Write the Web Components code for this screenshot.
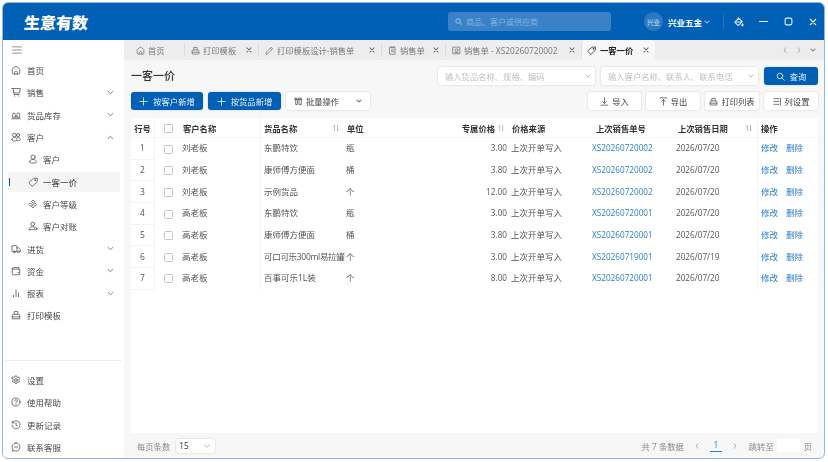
<!DOCTYPE html>
<html lang="zh-CN">
<head>
<meta charset="utf-8">
<title>生意有数</title>
<style>
    html, body { margin: 0; height: 100%; background: #fff; }
    body { padding: 2px 3px 3px 2px; box-sizing: border-box; font-family: "Open Sans", "Noto Sans CJK SC", sans-serif; }
</style>
</head>
<body>
<app-window>
    <app-header slot="header"></app-header>
    <side-nav slot="nav"></side-nav>
    <tab-bar slot="tabs"></tab-bar>
    <price-page slot="page"></price-page>
</app-window>

<script>
const ICONS = {
    home: '<path d="M2 7.500c0-1 .4-1.700 1.200-2.300L8 1.800l4.800 3.400c.8.600 1.200 1.300 1.200 2.300v5a2 2 0 0 1-2 2H4a2 2 0 0 1-2-2Z"/><path d="M5.500 14.500c0-3 1-5 2.500-5s2.500 2 2.500 5"/>',
    cart: '<path d="M1 2.500h14l-1.500 7H4.500L3.500 2.500"/><path d="M4.500 9.500 5 12h8"/><path d="M5.500 14.500h.5M12 14.500h.5"/>',
    stock: '<path d="M1 14h14M2.500 11V7a2.200 2.200 0 0 1 4.400 0v4ZM9.500 11V7a2.200 2.200 0 0 1 4.400 0v4ZM6.900 11h2.600"/>',
    users: '<circle cx="5.500" cy="5" r="3"/><circle cx="11.300" cy="4.800" r="2.500"/><path d="M1.500 12c0-2 1.800-3.500 4-3.500s4 1.500 4 3.500-1.800 2.500-4 2.500-4-.5-4-2.500Z"/><path d="M10 8.500c2.500-.4 5 1 5 3.200 0 1.800-2 2.500-5 2.300"/>',
    user: '<circle cx="8" cy="5" r="3.300"/><path d="M2.500 12.500c0-2.200 2.500-3.700 5.500-3.700s5.500 1.500 5.500 3.700c0 1.700-2.500 2-5.500 2s-5.500-.3-5.500-2Z"/>',
    tag: '<path d="M14.500 2H9L1.800 8.400a1 1 0 0 0 0 1.400l4.400 4.700a1 1 0 0 0 1.400 0L14.500 7.500Z"/><circle cx="11.300" cy="5" r=".8"/>',
    grade: '<path d="m8.500 2 2.500 2.500L8.500 7 6 4.500ZM4 6.500l2.500 2.500L4 11.500 1.500 9ZM12 7l1.500 2-1.500 2-2-2ZM8 10.500l2 2-2 2-2-2Z"/>',
    account: '<circle cx="7.500" cy="4.800" r="3"/><path d="M2 14c0-3 2.400-5 5.500-5 1.200 0 2.200.3 3 .8"/><path d="M2 14h7"/><circle cx="12.500" cy="12.500" r="2"/>',
    truck: '<path d="M1.500 4a1.500 1.500 0 0 1 1.500-1.500h5A1.500 1.500 0 0 1 9.500 4v8h-5M2 12 1.500 11V4M9.500 6h2.500l3 3v3h-1"/><circle cx="5" cy="12.500" r="1.600"/><circle cx="11.700" cy="12.500" r="1.600"/>',
    wallet: '<path d="M2 4.500A2 2 0 0 1 4 2.500h8.500V5M2 4.500V12a2 2 0 0 0 2 2h10V5H3"/><path d="M11 10.500h1.500"/>',
    chart: '<path d="M4 14v-2.500M8 14V3M12 14V8"/>',
    printer: '<path d="M5 7V2.500h6V7M2 13.500V9a2 2 0 0 1 2-2h8a2 2 0 0 1 2 2v4.500Z"/><path d="M2 11h12"/>',
    gear: '<circle cx="8" cy="8" r="2.200"/><path d="M6.800 1.500h2.400l.4 1.900 1.300.7 1.800-.7 1.200 2.100-1.400 1.300v1.400l1.400 1.300-1.200 2.100-1.800-.7-1.300.7-.4 1.900H6.800l-.4-1.900-1.300-.7-1.800.7-1.200-2.100 1.400-1.300V6.500L1.100 5.200l1.200-2.100 1.800.7 1.300-.7Z"/>',
    help: '<circle cx="8" cy="8" r="6.500"/><path d="M6 6.300a2 2 0 1 1 3 1.700c-.7.400-1 .8-1 1.600M8 11.500v.5"/>',
    history: '<path d="M2.300 4.500A6.500 6.500 0 1 1 1.500 8M2 1.800v2.900h2.900M8 4.500V8l2.500 1.500"/>',
    chat: '<path d="M8 1.500a6.500 6.500 0 1 1-3 12.300l-3 .7.800-2.800A6.500 6.500 0 0 1 8 1.500Z"/><path d="M5.500 8h5"/>',
    pen: '<path d="M2 14l.8-3.500L11 2.300 13.700 5l-8.200 8.200ZM9.500 4l2.500 2.500"/>',
    list: '<path d="M3.500 2h9v12.500h-9ZM6 1v2h4V1M6 7h4M6 10h4"/>',
    search: '<circle cx="7" cy="7" r="5"/><path d="m11 11 3.500 3.500"/>',
    doc: '<path d="M2 2h12v12H2Z"/><circle cx="8" cy="7.500" r="2.500"/><path d="M5 11.500h6"/>',
    plus: '<path d="M8 1.500v13M1.500 8h13"/>',
    batch: '<path d="M2 2h3v2.500H2ZM8 2h5v2.500H8ZM3 5v8.500h3V5ZM9 5v8.500h4V5Z"/>',
    import: '<path d="M8 1.500v10M4.500 8 8 11.500 11.500 8M2 14.500h12"/>',
    export: '<path d="M8 14.500v-10M4.500 8 8 4.500 11.500 8M2 1.500h12"/>',
    columns: '<path d="M1.500 3h9M1.500 8h9M1.500 13h9M13.500 2v12"/>',
    paint: '<path d="m7 1.500 6 6-5.500 5.500a1 1 0 0 1-1.400 0L2 8.900a1 1 0 0 1 0-1.400L7.500 2"/><path d="M2 8h10.500M13.500 11c.7 1 1 1.600 1 2a1 1 0 0 1-2 0c0-.4.300-1 1-2Z"/>',
    down: '<path d="m2.500 5.500 5.500 5 5.500-5"/>',
    up: '<path d="m2.500 10.500 5.500-5 5.500 5"/>',
    left: '<path d="m10.500 2.500-5 5.500 5 5.500"/>',
    right: '<path d="m5.500 2.500 5 5.500-5 5.500"/>',
    close: '<path d="m2.500 2.500 11 11M13.500 2.500l-11 11"/>',
    sort: '<path d="M5 13.500v-11L2.500 5M11 2.500v11L13.500 11"/>',
    menu: '<path d="M1 3h14M1 8h14M1 13h14"/>',
    minimize: '<path d="M1 8h14"/>',
    maximize: '<rect x="2" y="2" width="12" height="12" rx="3"/>'
};

function icon(name, size = 10, color = "currentColor", width = 1.1) {
    return `<svg viewBox="0 0 16 16" width="${size}" height="${size}" fill="none" stroke="${color}" stroke-width="${width * 16 / size}" stroke-linecap="round" stroke-linejoin="round" style="flex:none;display:block">${ICONS[name]}</svg>`;
}

// small helper so every component keeps the same setup
class Base extends HTMLElement {
    constructor() {
        super();
        this.attachShadow({ mode: "open" });
    }
}

class AppWindow extends Base {
    connectedCallback() {
        this.shadowRoot.innerHTML = `
            <style>
                :host {
                    display: grid;
                    box-sizing: border-box;
                    height: 100%;
                    grid-template: 37px 20px 1fr / 121px 1fr;
                    grid-template-areas: "header header" "nav tabs" "nav page";
                    border: 1px solid #8fb7de;
                    border-radius: 6px;
                    overflow: hidden;
                    background: #f7f7f7;
                    filter: blur(0.45px);
                }
                ::slotted([slot=header]) { grid-area: header; }
                ::slotted([slot=nav]) { grid-area: nav; min-height: 0; }
                ::slotted([slot=tabs]) { grid-area: tabs; }
                ::slotted([slot=page]) { grid-area: page; min-height: 0; }
            </style>
            <slot name="header"></slot>
            <slot name="nav"></slot>
            <slot name="tabs"></slot>
            <slot name="page"></slot>
        `;
    }
}

class AppHeader extends Base {
    connectedCallback() {
        this.shadowRoot.innerHTML = `
            <style>
                :host { display: flex; align-items: center; background: #0060b6; color: #fff; padding-left: 21px; white-space: nowrap; }
                .logo { width: 64px; flex: none; font-size: 16px; font-weight: 900; transform: skewX(-5deg); }
                .search { margin-left: 360px; width: 163px; height: 19px; box-sizing: border-box; border-radius: 3px; background: #3a82c8;
                    display: flex; align-items: center; gap: 4px; padding-left: 7px; font-size: 8px; color: #86b3df; flex: none; }
                .avatar { margin-left: 33px; width: 19px; height: 19px; border-radius: 50%; background: #2e78c0; flex: none;
                    display: grid; place-items: center; font-size: 6.500px; color: #dcebf8; }
                .org { margin-left: 5px; font-size: 8.500px; font-weight: 700; flex: none; }
                .caret { margin-left: 2px; color: #8ab6e0; }
                .sep { margin-left: 13px; width: 1px; height: 14px; background: #2a75bd; flex: none; }
                .ctl { display: flex; align-items: center; margin-left: 3px; }
                .ctl span { width: 24.500px; display: grid; place-items: center; }
            </style>
            <div class="logo">生意有数</div>
            <div class="search">${icon("search", 7, "#86b3df")}<span>商品、客户或供应商</span></div>
            <div class="avatar">兴业</div>
            <div class="org">兴业五金</div>
            <div class="caret">${icon("down", 6)}</div>
            <div class="sep"></div>
            <div class="ctl">
                <span>${icon("paint", 10, "#e3eef9")}</span>
                <span>${icon("minimize", 9, "#e3eef9")}</span>
                <span>${icon("maximize", 9, "#e3eef9")}</span>
                <span>${icon("close", 8, "#e3eef9")}</span>
            </div>
        `;
    }
}

class NavItem extends Base {
    connectedCallback() {
        const sub = this.hasAttribute("sub");
        const active = this.hasAttribute("active");
        const arrow = this.getAttribute("arrow");
        this.shadowRoot.innerHTML = `
            <style>
                :host { display: block; }
                .row { display: flex; align-items: center; height: 22.300px; box-sizing: border-box; position: relative;
                    font-size: 8.500px; color: #4a4a4a; margin: 0 4px 0 5px; padding-left: ${sub ? 20 : 3}px; gap: ${sub ? 5 : 6}px; }
                .row.active { height: 20px; margin-top: 1.150px; margin-bottom: 1.150px; background: #f5f5f5; border-radius: 3px; color: #333; }
                .bar { position: absolute; left: 1px; top: 6px; height: 8px; width: 1px; background: #0060b6; }
                .arrow { margin-left: auto; margin-right: 6px; color: #666; }
            </style>
            <div class="row ${active ? "active" : ""}">
                ${active ? '<i class="bar"></i>' : ""}
                ${icon(this.getAttribute("icon"), 10, "#555", 0.8)}
                <span><slot></slot></span>
                ${arrow ? `<span class="arrow">${icon(arrow, 7, "currentColor", 0.8)}</span>` : ""}
            </div>
        `;
    }
}

class SideNav extends Base {
    connectedCallback() {
        this.shadowRoot.innerHTML = `
            <style>
                :host { display: flex; flex-direction: column; background: #fff; }
                .toggle { height: 19px; display: flex; align-items: center; padding: 1px 0 0 9px; box-sizing: border-box; color: #777; }
                .bottom { margin-top: auto; border-top: 1px solid #eee; margin-left: 2px; margin-right: 2px; padding-top: 7.500px; }
                .bottom nav-item { margin-left: -2px; }
            </style>
            <div class="toggle">${icon("menu", 10, "#777", 0.8)}</div>
            <nav-item icon="home">首页</nav-item>
            <nav-item icon="cart" arrow="down">销售</nav-item>
            <nav-item icon="stock" arrow="down">货品库存</nav-item>
            <nav-item icon="users" arrow="up">客户</nav-item>
            <nav-item icon="user" sub>客户</nav-item>
            <nav-item icon="tag" sub active>一客一价</nav-item>
            <nav-item icon="grade" sub>客户等级</nav-item>
            <nav-item icon="account" sub>客户对账</nav-item>
            <nav-item icon="truck" arrow="down">进货</nav-item>
            <nav-item icon="wallet" arrow="down">资金</nav-item>
            <nav-item icon="chart" arrow="down">报表</nav-item>
            <nav-item icon="printer">打印模板</nav-item>
            <div class="bottom">
                <nav-item icon="gear">设置</nav-item>
                <nav-item icon="help">使用帮助</nav-item>
                <nav-item icon="history">更新记录</nav-item>
                <nav-item icon="chat">联系客服</nav-item>
            </div>
        `;
    }
}

class TabItem extends Base {
    connectedCallback() {
        const active = this.hasAttribute("active");
        const closable = !this.hasAttribute("fixed");
        this.shadowRoot.innerHTML = `
            <style>
                :host { display: flex; flex: none; width: ${this.getAttribute("w")}px; }
                .tab { flex: 1; display: flex; align-items: center; gap: ${active ? 4 : 3}px; padding: 0 6px 0 ${active ? 5 : 6}px; font-size: 8.300px; box-sizing: border-box;
                    color: ${active ? "#222" : "#777"}; white-space: nowrap; overflow: hidden; position: relative;
                    background: ${active ? "#f7f7f7" : "transparent"}; border-radius: ${active ? "4px 4px 0 0" : "0"}; font-weight: ${active ? 600 : 400}; }
                .x { margin-left: auto; color: #777; }
                .sep { width: 1px; height: 14px; background: ${active ? "transparent" : "#dedede"}; align-self: center; }
            </style>
            <div class="tab">${icon(this.getAttribute("icon"), 9, active ? "#333" : "#777", 0.8)}<span><slot></slot></span>
                ${closable ? `<span class="x">${icon("close", 6, "#777")}</span>` : ""}
            </div>
            <div class="sep"></div>
        `;
    }
}

class TabBar extends Base {
    connectedCallback() {
        this.shadowRoot.innerHTML = `
            <style>
                :host { display: flex; align-items: stretch; background: #ededed; padding-left: 6px; }
                .nav { margin-left: auto; display: flex; align-items: center; gap: 8px; padding-right: 8px; color: #b4b4b4; }
            </style>
            <tab-item icon="home" w="55" fixed>首页</tab-item>
            <tab-item icon="printer" w="74">打印模板</tab-item>
            <tab-item icon="pen" w="123">打印模板设计-销售单</tab-item>
            <tab-item icon="list" w="64">销售单</tab-item>
            <tab-item icon="doc" w="136">销售单 - XS20260720002</tab-item>
            <tab-item icon="tag" w="74" active>一客一价</tab-item>
            <div class="nav">${icon("left", 6)}${icon("right", 6)}${icon("down", 6, "#888")}</div>
        `;
    }
}

class ToolButton extends Base {
    connectedCallback() {
        const primary = this.hasAttribute("primary");
        this.shadowRoot.innerHTML = `
            <style>
                :host { display: block; flex: none; width: ${this.getAttribute("w")}px; height: 18px; }
                button { all: unset; box-sizing: border-box; width: 100%; height: 100%; display: flex; align-items: center; justify-content: center;
                    gap: ${primary ? 5 : 3}px; font-size: 8.300px; border-radius: 3px;
                    background: ${primary ? "#0060b6" : "#fff"}; color: ${primary ? "#e9f2fb" : "#444"};
                    box-shadow: 0 0 2px rgba(0,0,0,.2); }
                .caret { margin-left: 14px; color: #777; }
            </style>
            <button>${icon(this.getAttribute("icon"), 9, primary ? "#e9f2fb" : "#555", 0.8)}<span><slot></slot></span>
                ${this.hasAttribute("caret") ? `<span class="caret">${icon("down", 6)}</span>` : ""}
            </button>
        `;
    }
}

class SelectBox extends Base {
    connectedCallback() {
        const val = this.hasAttribute("value");
        this.shadowRoot.innerHTML = `
            <style>
                :host { display: block; flex: none; width: ${this.getAttribute("w")}px; height: ${this.getAttribute("h") || 18}px; }
                div { box-sizing: border-box; height: 100%; display: flex; align-items: center; justify-content: space-between;
                    padding: ${val ? "0 4px 0 3px" : "0 4px 0 7px"}; background: #fff; border-radius: 3px; box-shadow: 0 0 2px rgba(0,0,0,.2);
                    font-size: 8.300px; color: ${val ? "#333" : "#c0c0c0"}; }
            </style>
            <div><span><slot></slot></span>${icon("down", val ? 8 : 6, "#999", 0.7)}</div>
        `;
    }
}

const ROWS = [
    ["刘老板", "东鹏特饮", "瓶", "3.00", "XS20260720002", "2026/07/20"],
    ["刘老板", "康师傅方便面", "桶", "3.80", "XS20260720002", "2026/07/20"],
    ["刘老板", "示例货品", "个", "12.00", "XS20260720002", "2026/07/20"],
    ["高老板", "东鹏特饮", "瓶", "3.00", "XS20260720001", "2026/07/20"],
    ["高老板", "康师傅方便面", "桶", "3.80", "XS20260720001", "2026/07/20"],
    ["高老板", "可口可乐300ml易拉罐", "个", "3.00", "XS20260719001", "2026/07/19"],
    ["高老板", "百事可乐1L装", "个", "8.00", "XS20260720001", "2026/07/20"]
];

class PriceTable extends Base {
    connectedCallback() {
        const sort = `<span class="sort">${icon("sort", 8, "#aaa", 0.8)}</span>`;
        const box = '<i class="box"></i>';
        this.shadowRoot.innerHTML = `
            <style>
                :host { display: block; background: #fff; overflow: hidden; }
                table { border-collapse: separate; border-spacing: 0; table-layout: fixed; width: 687px; font-size: 8.500px; color: #555; }
                th { box-sizing: border-box; height: 20px; padding: 0 3px; font-size: 8.300px; font-weight: 700; color: #333; text-align: left; border-bottom: 1px solid #f6f6f6; white-space: nowrap; position: relative; }
                td { box-sizing: border-box; height: 21.670px; padding: 0 3px; white-space: nowrap; line-height: 12px; border-bottom: 1px solid transparent; }
                th.c, td.c { text-align: center; }
                th.r, td.r { text-align: right; }
                .ln { border-right: 1px solid #f3f3f3; }
                .lf { border-left: 1px solid #f3f3f3; }
                td.bb { border-bottom-color: #f3f3f3; }
                .sort { position: absolute; right: 4px; top: 6px; }
                .box { display: inline-block; box-sizing: border-box; width: 9px; height: 9px; border: 1px solid #c4c4c4; border-radius: 1.500px; vertical-align: middle; }
                a { color: #2a7fd0; text-decoration: none; font-size: 8.200px; }
                .ops a { font-size: 8.500px; }
                .ops a + a { margin-left: 8px; }
                .num { font-size: 8.200px; }
                .tight { letter-spacing: -0.3px; }
            </style>
            <table>
                <colgroup><col width="24"><col width="26"><col width="80"><col width="83"><col width="71"><col width="92"><col width="83"><col width="85"><col width="82"><col width="61"></colgroup>
                <thead><tr>
                    <th class="c ln">行号</th><th class="c">${box}</th><th class="ln" style="padding-left:2px">客户名称</th>
                    <th>货品名称${sort}</th><th>单位</th>
                    <th class="r" style="padding-right:12px">专属价格<span class="sort" style="right:2px">${icon("sort", 8, "#bbb", 0.8)}</span></th><th style="padding-left:5px">价格来源</th>
                    <th style="padding-left:6px">上次销售单号</th><th>上次销售日期${sort}</th><th class="lf">操作</th>
                </tr></thead>
                <tbody>
                    ${ROWS.map((r, i) => `<tr>
                        <td class="c ln bb">${i + 1}</td><td class="c">${box}</td><td class="ln" style="padding-left:1px">${r[0]}</td>
                        <td style="padding-right:0"><span class="${r[1].length > 10 ? "tight" : ""}">${r[1]}</span></td><td style="padding-left:2px">${r[2]}</td><td class="r num" style="padding-right:0">${r[3]}</td>
                        <td style="padding-left:4px">上次开单写入</td>
                        <td style="padding-left:2px"><a>${r[4]}</a></td><td class="num" style="padding-left:1px">${r[5]}</td>
                        <td class="ops lf"><a>修改</a><a>删除</a></td>
                    </tr>`).join("")}
                </tbody>
            </table>
        `;
    }
}

class PagerBar extends Base {
    connectedCallback() {
        this.shadowRoot.innerHTML = `
            <style>
                :host { display: flex; align-items: center; height: 25px; font-size: 8.300px; color: #888; padding-left: 6px; flex: none; }
                .gap { margin-left: auto; }
                .pg { display: inline-block; width: 12px; text-align: center; color: #2a7fd0; border-bottom: 1px solid #2a7fd0; padding-bottom: 1px; margin: 0 10px; }
                .in { width: 23px; height: 13px; background: #fff; border-radius: 2px; margin: 0 4px 0 3px; }
                .info { display: flex; align-items: center; padding-right: 6px; }
            </style>
            <span>每页条数</span>
            <select-box w="39" h="14" value style="margin-left:6px">15</select-box>
            <div class="gap"></div>
            <div class="info">
                <span style="margin-right:10px">共 7 条数据</span>
                ${icon("left", 6, "#bbb")}
                <span class="pg">1</span>
                ${icon("right", 6, "#bbb")}
                <span style="margin-left:11px">跳转至</span>
                <i class="in"></i><span>页</span>
            </div>
        `;
    }
}

class PricePage extends Base {
    connectedCallback() {
        this.shadowRoot.innerHTML = `
            <style>
                :host { display: flex; flex-direction: column; padding: 0 6px 0 7px; }
                .top { display: flex; align-items: center; height: 18px; margin-top: 7px; gap: 6px; }
                h1 { margin: 0 auto 2px 0; font-size: 11px; font-weight: 500; color: #333; }
                .bar { display: flex; height: 18px; margin-top: 7px; gap: 5px; }
                .bar .push { margin-left: auto; }
                price-table { flex: 1; margin-top: 8px; min-height: 0; }
            </style>
            <div class="top">
                <h1>一客一价</h1>
                <select-box w="157">输入货品名称、规格、编码</select-box>
                <select-box w="157">输入客户名称、联系人、联系电话</select-box>
                <tool-button w="54" icon="search" primary>查询</tool-button>
            </div>
            <div class="bar">
                <tool-button w="72" icon="plus" primary>按客户新增</tool-button>
                <tool-button w="73" icon="plus" primary>按货品新增</tool-button>
                <tool-button w="84" icon="batch" caret>批量操作</tool-button>
                <tool-button class="push" w="53" icon="import">导入</tool-button>
                <tool-button w="54" icon="export">导出</tool-button>
                <tool-button w="54" icon="printer">打印列表</tool-button>
                <tool-button w="54" icon="columns">列设置</tool-button>
            </div>
            <price-table></price-table>
            <pager-bar></pager-bar>
        `;
    }
}

customElements.define("app-window", AppWindow);
customElements.define("app-header", AppHeader);
customElements.define("nav-item", NavItem);
customElements.define("side-nav", SideNav);
customElements.define("tab-item", TabItem);
customElements.define("tab-bar", TabBar);
customElements.define("tool-button", ToolButton);
customElements.define("select-box", SelectBox);
customElements.define("price-table", PriceTable);
customElements.define("pager-bar", PagerBar);
customElements.define("price-page", PricePage);
</script>
</body>
</html>
